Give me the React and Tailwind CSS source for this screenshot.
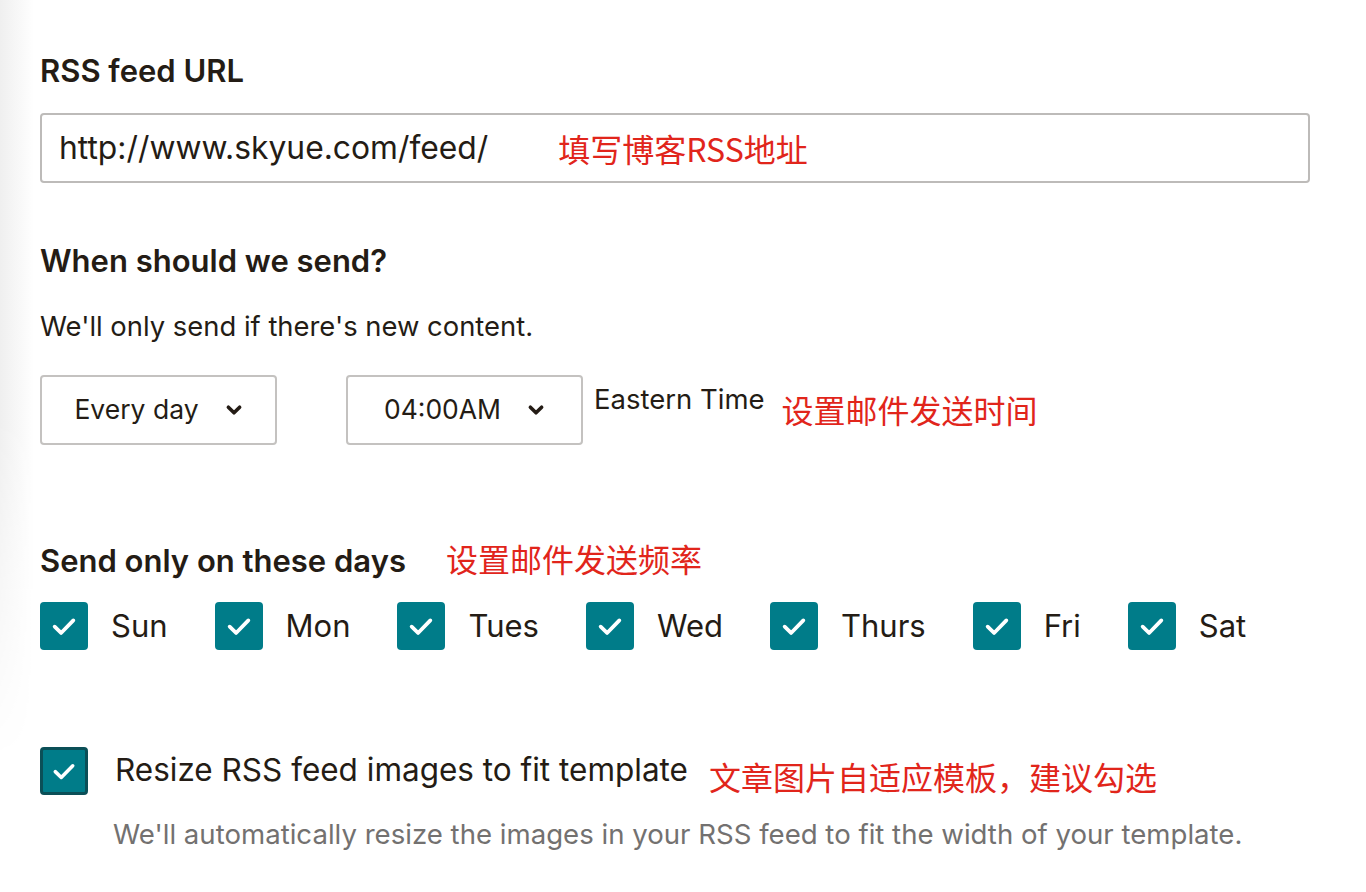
import React from "react";

const days = ["Sun", "Mon", "Tues", "Wed", "Thurs", "Fri", "Sat"];

function Check({ className = "" }) {
  return (
    <svg viewBox="0 0 24 24" className={className} fill="none" stroke="white" strokeWidth="2.8" strokeLinecap="round" strokeLinejoin="round">
      <polyline points="5,12.5 9.8,17.2 19,7.8" />
    </svg>
  );
}

function Chevron() {
  return (
    <svg viewBox="0 0 16 16" className="w-[18px] h-[18px]" fill="none" stroke="#241c15" strokeWidth="3.2" strokeLinecap="round" strokeLinejoin="round">
      <polyline points="3,5.5 8,10.5 13,5.5" />
    </svg>
  );
}

function Select({ value }) {
  return (
    <div className="w-[237px] h-[70px] border-2 border-[#c4c2c0] rounded-[4px] flex items-center justify-center gap-[26px] text-[26.5px] text-[#241c15]">
      <span>{value}</span>
      <Chevron />
    </div>
  );
}

function DayBox({ label }) {
  return (
    <label className="flex items-center gap-[23px]">
      <span className="w-[48px] h-[48px] rounded-[4px] bg-[#007c89] flex items-center justify-center">
        <Check className="w-[32px] h-[32px]" />
      </span>
      <span className="text-[31px] text-[#241c15]">{label}</span>
    </label>
  );
}

const note = "text-[#e1251b] text-[32px] font-['Noto_Sans_CJK_SC','Noto_Sans',sans-serif]";

export default function App() {
  return (
    <div className="relative w-[1366px] min-h-[892px] bg-white font-['Inter','Noto_Sans_CJK_SC',sans-serif] text-[#241c15] overflow-hidden">
      <div className="absolute left-0 top-0 w-[34px] h-[760px] bg-linear-to-r from-[#efefef] to-white [mask-image:linear-gradient(to_bottom,black_55%,transparent)]" />
      <div className="relative pl-[40px] pr-[56px] pt-[53px]">
        <h2 className="text-[31px] leading-[36px] font-semibold">RSS feed URL</h2>
        <div className="mt-[24px] h-[70px] border-2 border-[#bdbbb9] rounded-[4px] flex items-center pl-[17px]">
          <span className="text-[31.8px]">http://www.skyue.com/feed/</span>
          <span className={`${note} ml-[70px] leading-[40px]`}>填写博客RSS地址</span>
        </div>

        <h2 className="mt-[60px] text-[31px] leading-[36px] font-semibold">When should we send?</h2>
        <p className="mt-[31px] text-[27.4px] leading-[32px]">We'll only send if there's new content.</p>

        <div className="mt-[33px] flex items-start">
          <Select value="Every day" />
          <div className="ml-[69px]">
            <Select value="04:00AM" />
          </div>
          <span className="ml-[11px] mt-[8px] text-[27.5px] leading-[32px]">Eastern Time</span>
          <span className={`${note} ml-[17px] mt-[14px] leading-[40px]`}>设置邮件发送时间</span>
        </div>

        <div className="mt-[98px] flex items-center">
          <h2 className="text-[31px] leading-[36px] font-semibold">Send only on these days</h2>
          <span className={`${note} ml-[40px] leading-[40px] -mt-[6px]`}>设置邮件发送频率</span>
        </div>

        <div className="mt-[23px] flex items-center gap-[47px]">
          {days.map((d) => (
            <DayBox key={d} label={d} />
          ))}
        </div>

        <div className="mt-[96px] flex items-center">
          <span className="w-[48px] h-[48px] rounded-[4px] bg-[#007c89] border-[3px] border-[#0b4f57] flex items-center justify-center">
            <Check className="w-[30px] h-[30px]" />
          </span>
          <span className="ml-[27px] text-[31.5px] leading-[40px] -mt-[2px]">Resize RSS feed images to fit template</span>
          <span className={`${note} ml-[21px] mt-[10px] leading-[40px]`}>文章图片自适应模板，建议勾选</span>
        </div>
        <p className="mt-[22px] ml-[73px] text-[27.6px] leading-[32px] text-[#737170]">
          We'll automatically resize the images in your RSS feed to fit the width of your template.
        </p>
      </div>
    </div>
  );
}
